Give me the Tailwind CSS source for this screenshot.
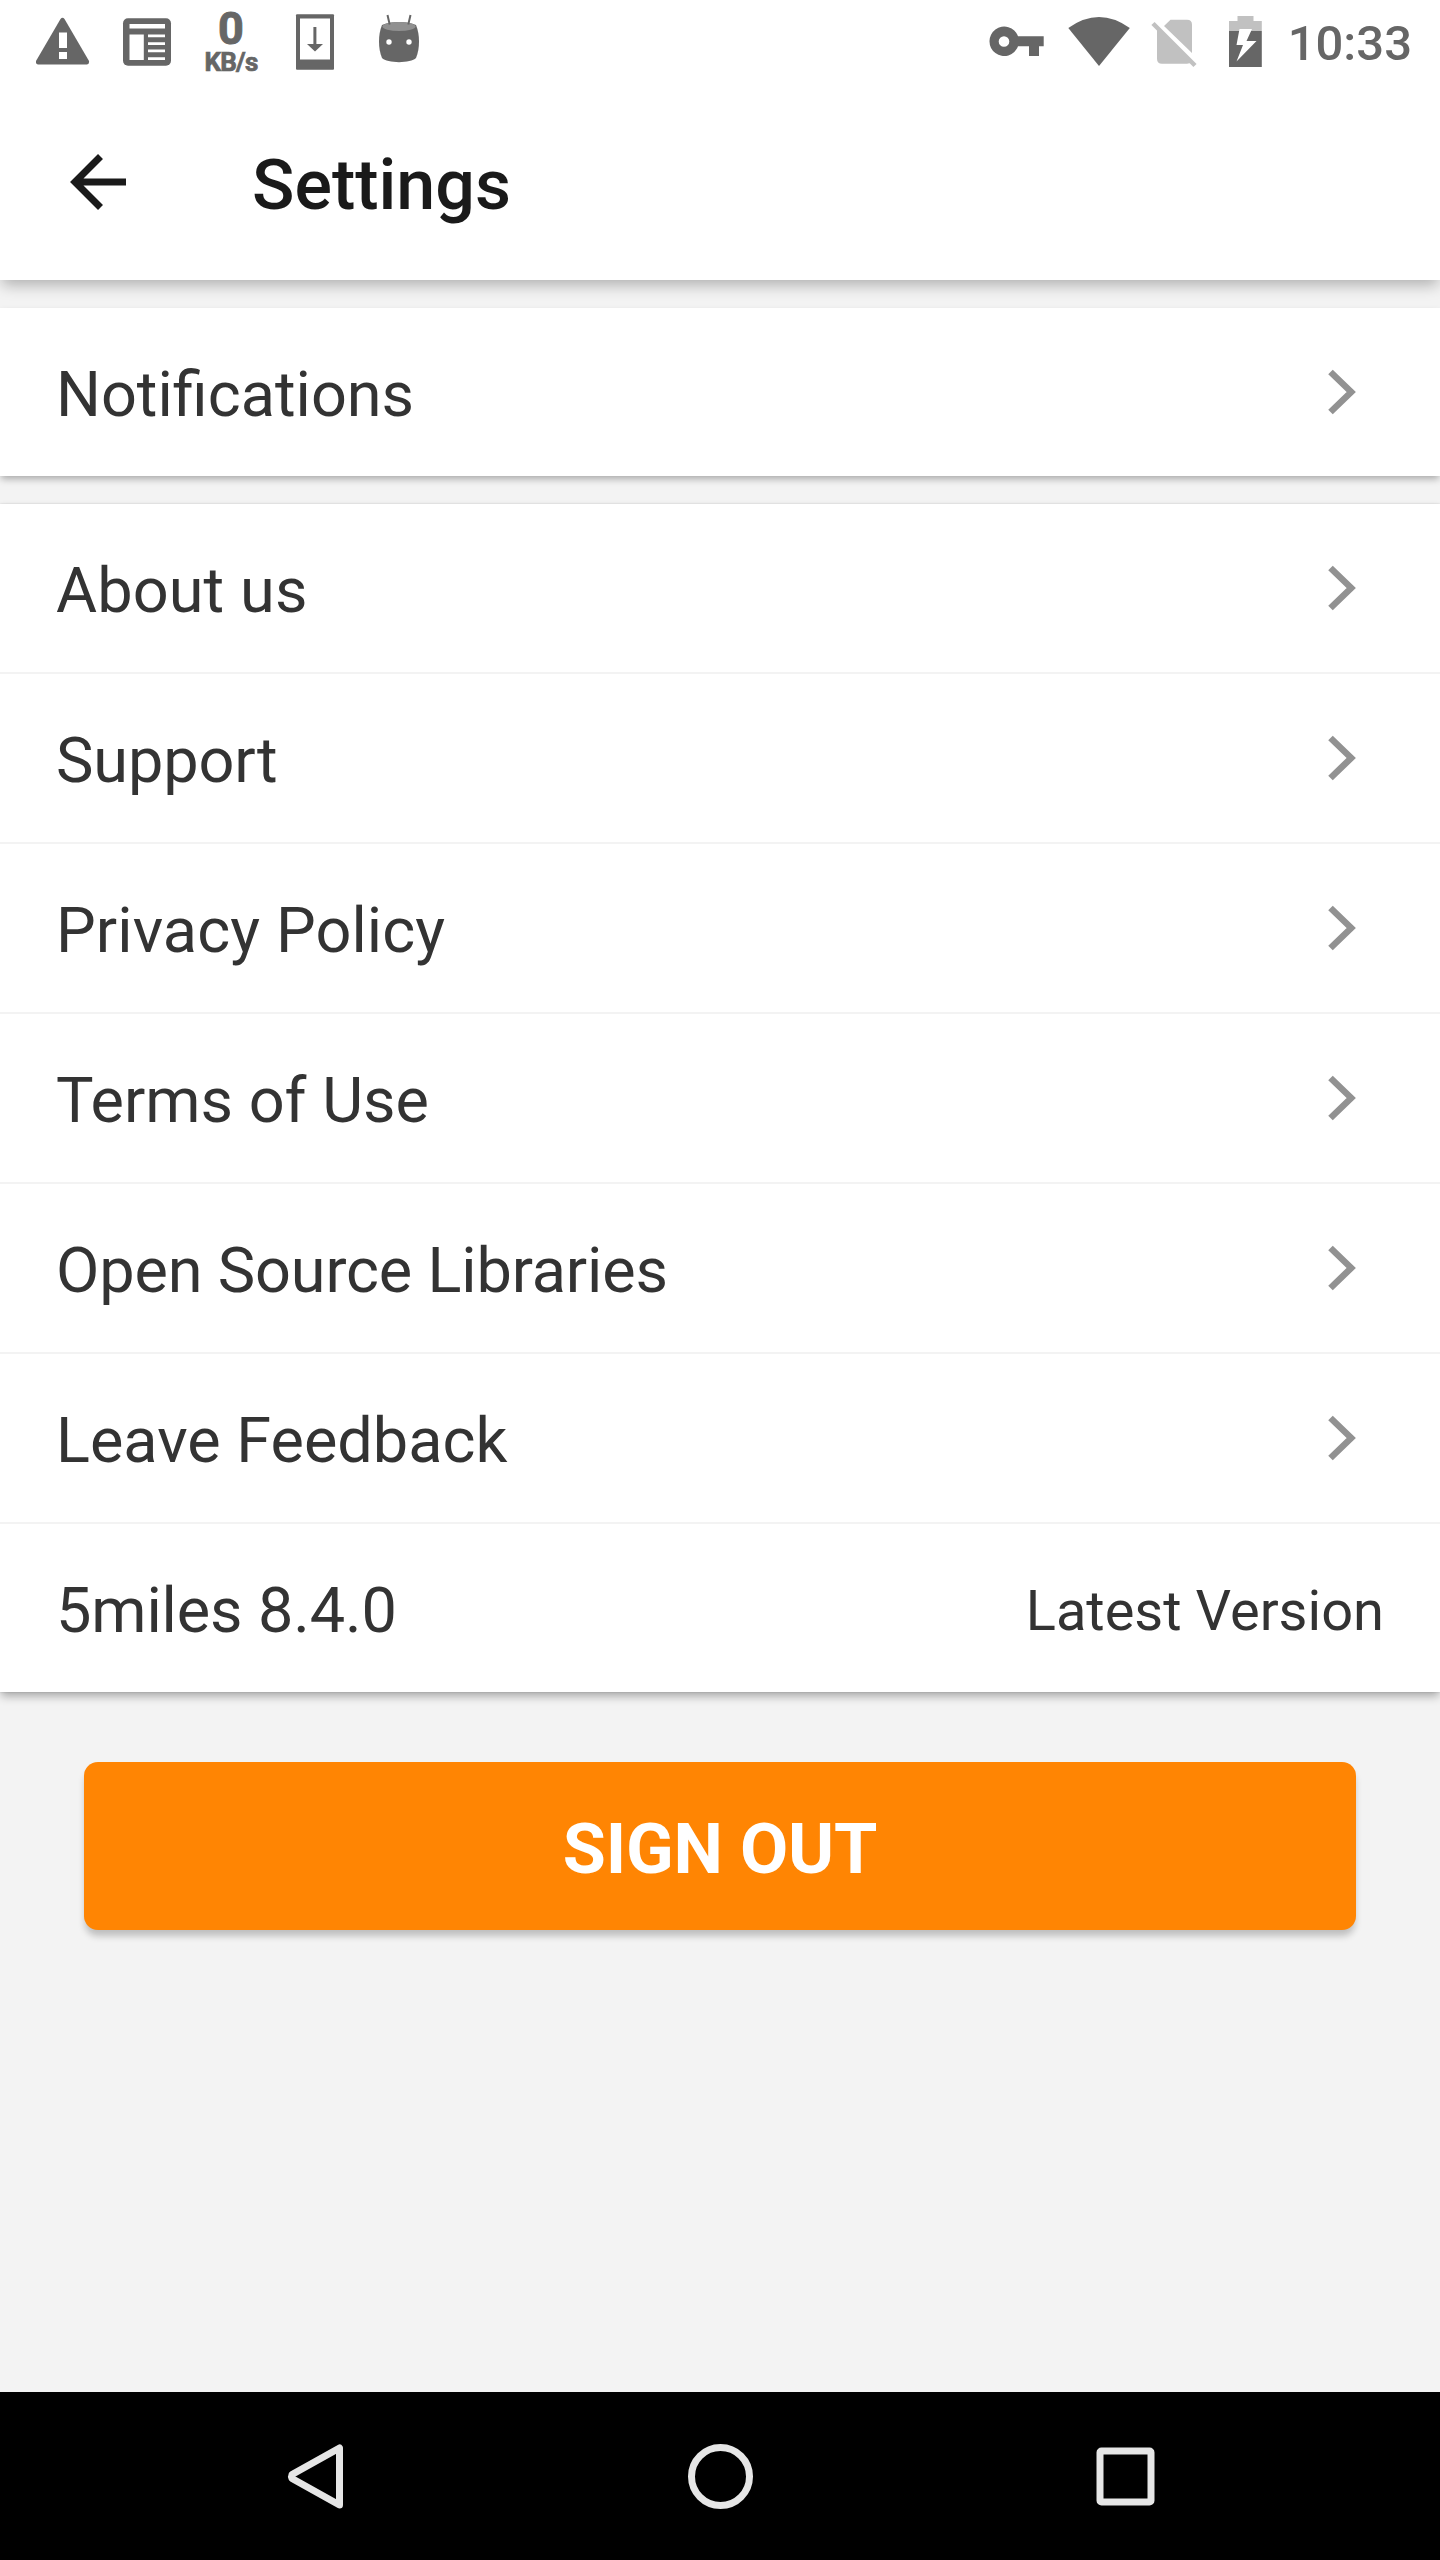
<!DOCTYPE html>
<html lang="en">
<head>
<meta charset="utf-8">
<title>Settings</title>
<script src="https://cdn.jsdelivr.net/npm/@tailwindcss/browser@4"></script>
</head>
<body class="bg-[#f3f3f3]">
<div class="flex h-[2560px] w-[1440px] flex-col overflow-hidden bg-[#f3f3f3] font-['Roboto',sans-serif] text-[63px] leading-none text-[#333]">
  <header class="h-[280px] shrink-0 bg-white shadow-[0_7px_14px_-2px_rgba(0,0,0,0.28)]">
    <div class="flex h-[84px] items-start justify-between pr-7 text-[#666]">
      <div class="flex h-[84px] items-start">
        <svg class="ml-9 h-[84px] w-[54px]" viewBox="36 0 54 84" fill="currentColor"><path d="M60.500 19q2-2.500 4 0L89 61q.5 3-2 3.500H38q-2.500-.5-2-3.500z"/><path fill="#fff" d="M59 32.500h8V48h-8zM59 52h8v7h-8z"/></svg>
        <svg class="ml-8 h-[84px] w-[50px]" viewBox="122 0 50 84"><rect x="123" y="18.300" width="48" height="47.500" rx="5" fill="currentColor"/><path fill="#fff" d="M129.500 24H165v4.500h-35.500zM129.500 34.500h14.300V60h-14.300zM148 34.500h17v2.800h-17zM148 42.300h17V45h-17zM148 49.500h17v2.800h-17zM148 57.300h17V60h-17z"/></svg>
        <div class="ml-[27px] flex w-[64px] flex-col items-center pt-[7px] font-bold">
          <span class="text-[45px] leading-[44px] [-webkit-text-stroke:1px_#666]">0</span>
          <span class="text-[26px] leading-[22px] tracking-[-0.8px] [-webkit-text-stroke:0.7px_#666]">KB/s</span>
        </div>
        <svg class="ml-[31px] h-[84px] w-[42px]" viewBox="294 0 42 84"><rect x="296" y="14.300" width="38" height="55.500" rx="1" fill="currentColor"/><path fill="#fff" d="M300 18.500h30v41h-30z"/><path fill="currentColor" d="M313.400 27h3v17h6.600L315 51.500 307 44h6.400z"/></svg>
        <svg class="ml-10 h-[84px] w-[46px]" viewBox="376 0 46 84"><path fill="currentColor" d="M382 25c8-4 26-4 34 0 4 9 4 24 0 33-5 5.500-29 5.500-34 0-4-9-4-24 0-33z"/><ellipse cx="399" cy="26.500" rx="16.500" ry="4.500" fill="#909090"/><path d="m387.500 15 2.200 9.500M410.500 15l-2.200 9.500" stroke="currentColor" stroke-width="2" fill="none"/><circle cx="389" cy="42" r="2.700" fill="#fff"/><circle cx="409" cy="42" r="2.700" fill="#fff"/></svg>
      </div>
      <div class="flex h-[84px] items-start">
        <svg class="h-[84px] w-[56px]" viewBox="988 0 56 84" fill="currentColor"><path fill-rule="evenodd" d="M1018 36.300h25.700v10H1039V56h-10v-9.700h-11a14.700 14.700 0 1 1 0-10zM1004 36.200a5.300 5.300 0 1 0 0 10.600 5.300 5.300 0 0 0 0-10.600z"/></svg>
        <svg class="ml-6 h-[84px] w-[62px]" viewBox="1068 0 62 84"><path fill="currentColor" d="M1068.300 28q30.700-22 61.500 0L1099 66z"/></svg>
        <svg class="ml-5 h-[84px] w-[48px]" viewBox="1150 0 48 84"><path fill="#c1c1c1" d="m1164 26 6.500-6.300H1187q5 0 5 5V53zM1157 29l33.500 34-3.500.7h-25q-5 0-5-5z"/><path d="m1153 23.500 42 42" stroke="#c1c1c1" stroke-width="4.500"/></svg>
        <svg class="ml-7 h-[84px] w-[40px]" viewBox="1226 0 40 84"><path fill="#c1c1c1" d="M1229 31V21h8.500v-5h16v5h8.300v10z"/><path fill="currentColor" d="M1229 31h32.800v36H1229z"/><path fill="#fff" d="M1239.500 29h12.500l-5.500 12h10L1236.500 61.500 1243 45h-6.500z"/></svg>
        <span class="ml-[22px] pt-[20px] text-[49px] font-medium leading-[48px]">10:33</span>
      </div>
    </div>
    <div class="flex h-[196px] items-center">
      <svg class="ml-[70px] size-[58px]" viewBox="70 153 58 58" fill="none" stroke="#1a1a1a" stroke-width="7"><path d="m100.500 156.500-25.500 25.500 25.500 25.500M75 182h51"/></svg>
      <h1 class="ml-[124px] pt-[6px] text-[70px] font-medium text-[#1a1a1a]">Settings</h1>
    </div>
  </header>

  <nav class="mt-7 h-[168px] shrink-0 bg-white shadow-[0_4px_7px_-1px_rgba(0,0,0,0.3)]">
    <a class="flex h-[168px] items-center justify-between pl-14 pr-[84px]"><span class="pt-[5px]">Notifications</span><svg class="h-[46px] w-[28px]" viewBox="0 0 28 46" fill="none" stroke="#929292" stroke-width="6.500"><path d="m2.500 3 20.700 20L2.500 43"/></svg></a>
  </nav>

  <nav class="mt-7 h-[1188px] shrink-0 bg-white shadow-[0_5px_9px_-1px_rgba(0,0,0,0.32),0_0_2px_rgba(0,0,0,0.15)]">
    <a class="flex h-[170px] items-center justify-between border-b-2 border-[#f3f3f3] pl-14 pr-[84px]"><span class="pt-[5px] tracking-[0.12px]">About us</span><svg class="h-[46px] w-[28px]" viewBox="0 0 28 46" fill="none" stroke="#929292" stroke-width="6.500"><path d="m2.500 3 20.700 20L2.500 43"/></svg></a>
    <a class="flex h-[170px] items-center justify-between border-b-2 border-[#f3f3f3] pl-14 pr-[84px]"><span class="pt-[5px] tracking-[-0.1px]">Support</span><svg class="h-[46px] w-[28px]" viewBox="0 0 28 46" fill="none" stroke="#929292" stroke-width="6.500"><path d="m2.500 3 20.700 20L2.500 43"/></svg></a>
    <a class="flex h-[170px] items-center justify-between border-b-2 border-[#f3f3f3] pl-14 pr-[84px]"><span class="pt-[5px] tracking-[0.1px]">Privacy Policy</span><svg class="h-[46px] w-[28px]" viewBox="0 0 28 46" fill="none" stroke="#929292" stroke-width="6.500"><path d="m2.500 3 20.700 20L2.500 43"/></svg></a>
    <a class="flex h-[170px] items-center justify-between border-b-2 border-[#f3f3f3] pl-14 pr-[84px]"><span class="pt-[5px]">Terms of Use</span><svg class="h-[46px] w-[28px]" viewBox="0 0 28 46" fill="none" stroke="#929292" stroke-width="6.500"><path d="m2.500 3 20.700 20L2.500 43"/></svg></a>
    <a class="flex h-[170px] items-center justify-between border-b-2 border-[#f3f3f3] pl-14 pr-[84px]"><span class="pt-[5px] tracking-[-0.15px]">Open Source Libraries</span><svg class="h-[46px] w-[28px]" viewBox="0 0 28 46" fill="none" stroke="#929292" stroke-width="6.500"><path d="m2.500 3 20.700 20L2.500 43"/></svg></a>
    <a class="flex h-[170px] items-center justify-between border-b-2 border-[#f3f3f3] pl-14 pr-[84px]"><span class="pt-[5px]">Leave Feedback</span><svg class="h-[46px] w-[28px]" viewBox="0 0 28 46" fill="none" stroke="#929292" stroke-width="6.500"><path d="m2.500 3 20.700 20L2.500 43"/></svg></a>
    <div class="flex h-[168px] items-center justify-between px-14"><span class="pt-[5px] tracking-[-0.12px]">5miles 8.4.0</span><span class="pt-[5px] text-[56px]">Latest Version</span></div>
  </nav>

  <button class="mx-[84px] mt-[70px] flex h-[168px] shrink-0 items-center justify-center rounded-[14px] bg-[#ff8503] pt-[6px] text-[70px] font-bold tracking-[-0.2px] text-white shadow-[0_7px_7px_-1px_rgba(0,0,0,0.22)]">SIGN OUT</button>

  <footer class="mt-auto flex h-[168px] shrink-0 items-center bg-black">
    <svg class="ml-[286px] size-[68px]" viewBox="286 2442 68 68" fill="none" stroke="#e6e6e6" stroke-width="7" stroke-linejoin="round"><path d="M339.500 2448v57L292 2478.500q-1-2 0-4z"/></svg>
    <svg class="ml-[332px] size-[68px]" viewBox="686 2442 68 68" fill="none" stroke="#e6e6e6" stroke-width="7"><circle cx="720.500" cy="2476.500" r="29"/></svg>
    <svg class="ml-[338px] size-[68px]" viewBox="1092 2442 68 68" fill="none" stroke="#e6e6e6" stroke-width="7"><rect x="1100" y="2451" width="51" height="51" rx="1.500"/></svg>
  </footer>
</div>
</body>
</html>
